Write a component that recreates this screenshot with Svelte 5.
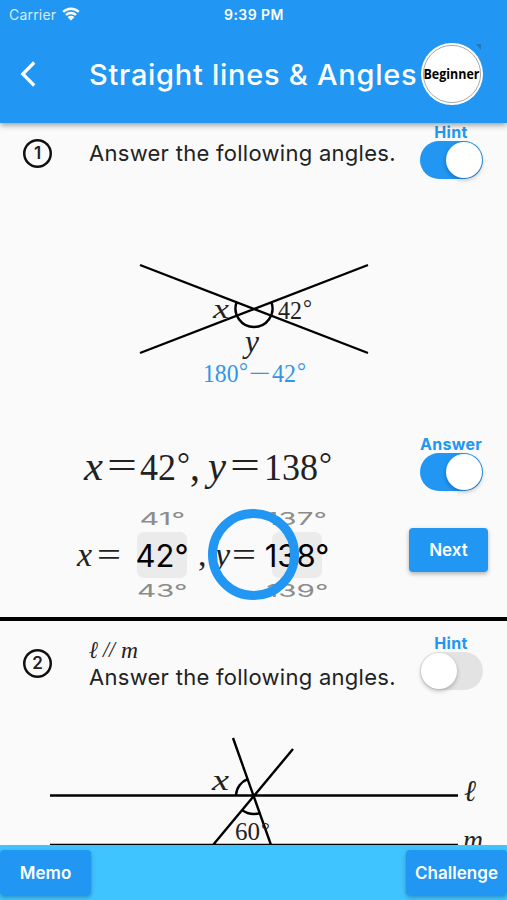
<script>
    let hintOne = $state(true);
    let answerOne = $state(true);
    let hintTwo = $state(false);

    // math labels: t text, x/y baseline start, w drawn width, s font size, i italic
    const figureOne = [
        { t: 'x', x: 213, y: 318, w: 16, s: 28, i: true },
        { t: '42', x: 278, y: 319, w: 24, s: 25 },
        { t: '°', x: 303, y: 316, w: 9, s: 23 },
        { t: 'y', x: 245, y: 352, w: 14, s: 32, i: true }
    ];
    const figureOneHint = [
        { t: '180', x: 203, y: 382, w: 35.5, s: 26 },
        { t: '°', x: 239, y: 379, w: 9, s: 23 },
        { t: '−', x: 249, y: 382, w: 22, s: 26 },
        { t: '42', x: 272, y: 382, w: 24, s: 26 },
        { t: '°', x: 297, y: 379, w: 9, s: 23 }
    ];
    const solution = [
        { t: 'x', x: 84, y: 480, w: 19, s: 41, i: true },
        { t: '=', x: 107, y: 478, w: 30, s: 38 },
        { t: '42', x: 140, y: 480, w: 36, s: 38 },
        { t: '°', x: 177, y: 475, w: 13, s: 34 },
        { t: ',', x: 190, y: 480, w: 10, s: 42 },
        { t: 'y', x: 208, y: 480, w: 18, s: 41, i: true },
        { t: '=', x: 230, y: 478, w: 30, s: 38 },
        { t: '138', x: 264, y: 480, w: 54, s: 38 },
        { t: '°', x: 319, y: 475, w: 13, s: 34 }
    ];
    const figureTwo = [
        { t: 'x', x: 212, y: 790, w: 17, s: 29, i: true },
        { t: '60', x: 235, y: 840, w: 25, s: 26 },
        { t: '°', x: 261, y: 837, w: 9, s: 22 },
        { t: 'ℓ', x: 464, y: 801, w: 12, s: 30, i: true },
        { t: 'm', x: 463, y: 850, w: 20, s: 29, i: true }
    ];
</script>

{#snippet toggle(name, on, flip)}
    <div class="toggle">
        <span class="toggle-name">{name}</span>
        <button class={on ? 'track on' : 'track'} aria-label={name} onclick={flip}>
            <span class="thumb"></span>
        </button>
    </div>
{/snippet}

<div class="screen">
    <header>
        <div class="status">
            <span class="carrier">Carrier</span>
            <svg class="wifi" width="18" height="14" viewBox="0 0 18 14">
                <path d="M1.2 4.9a11.2 11.2 0 0 1 15.6 0M4 8a7.1 7.1 0 0 1 10 0" />
                <path class="dot" d="M9 13.600L5.600 10.200a4.800 4.800 0 0 1 6.800 0z" />
            </svg>
            <span class="time">9:39 PM</span>
        </div>
        <div class="bar">
            <svg class="back" width="18" height="28" viewBox="0 0 18 28">
                <path d="M15.2 2.5L3.8 14l11.4 11.5" />
            </svg>
            <h1>Straight lines &amp; Angles</h1>
            <svg class="level" width="64" height="64" viewBox="0 0 64 64">
                <path class="corner" d="M56 2h5v6z" />
                <circle class="disc" cx="32" cy="32" r="31" />
                <circle class="rim" cx="32" cy="32" r="28.6" />
                <text x="3.5" y="37" textLength="56" lengthAdjust="spacingAndGlyphs">Beginner</text>
            </svg>
        </div>
    </header>

    <main>
        <section class="problem first">
            <div class="head">
                <span class="number">1</span>
                <p>Answer the following angles.</p>
                {@render toggle('Hint', hintOne, () => (hintOne = !hintOne))}
            </div>
            <svg class="figure" width="507" height="245" viewBox="0 190 507 245">
                <path d="M140 265L368 353M140 353L368 265" />
                <path d="M236.5 302.5A18.5 18.5 0 1 0 271.5 302.5" />
                {#each figureOne as g}
                    <text class:italic={g.i} x={g.x} y={g.y} font-size={g.s} textLength={g.w} lengthAdjust="spacingAndGlyphs">{g.t}</text>
                {/each}
                {#if hintOne}
                    {#each figureOneHint as g}
                        <text class="hint" x={g.x} y={g.y} font-size={g.s} textLength={g.w} lengthAdjust="spacingAndGlyphs">{g.t}</text>
                    {/each}
                {/if}
            </svg>
            <div class="row solution">
                <svg width="400" height="65" viewBox="0 435 400 65">
                    {#if answerOne}
                        {#each solution as g}
                            <text class:italic={g.i} x={g.x} y={g.y} font-size={g.s} textLength={g.w} lengthAdjust="spacingAndGlyphs">{g.t}</text>
                        {/each}
                    {/if}
                </svg>
                {@render toggle('Answer', answerOne, () => (answerOne = !answerOne))}
            </div>
            <div class="row picker">
                <span class="var"><i>x</i><b>=</b></span>
                <div class="wheel">
                    <span class="side narrow">41°</span>
                    <span class="picked">42°</span>
                    <span class="side">43°</span>
                </div>
                <span class="var second"><em>,</em><i>y</i><b>=</b></span>
                <div class="wheel">
                    <span class="side">137°</span>
                    <span class="picked">138°</span>
                    <span class="side">139°</span>
                </div>
                <button class="btn next">Next</button>
                <div class="touch"></div>
            </div>
        </section>

        <section class="problem">
            <div class="head two">
                <span class="number">2</span>
                <div class="text">
                    <svg width="60" height="24" viewBox="0 0 60 24">
                        <text class="italic" x="0" y="19" font-size="24" textLength="9" lengthAdjust="spacingAndGlyphs">ℓ</text>
                        <text class="italic" x="14" y="18" font-size="23" textLength="12" lengthAdjust="spacingAndGlyphs">//</text>
                        <text class="italic" x="32" y="19" font-size="23" textLength="17" lengthAdjust="spacingAndGlyphs">m</text>
                    </svg>
                    <p>Answer the following angles.</p>
                </div>
                {@render toggle('Hint', hintTwo, () => (hintTwo = !hintTwo))}
            </div>
            <svg class="figure" width="507" height="150" viewBox="0 710 507 150">
                <path d="M50 795.5H458M50 845H458M233 738L271 845M293 749L213 845" />
                <path d="M236 795A18 18 0 0 1 248 779M242 810Q250 816 260.5 813" />
                {#each figureTwo as g}
                    <text class:italic={g.i} x={g.x} y={g.y} font-size={g.s} textLength={g.w} lengthAdjust="spacingAndGlyphs">{g.t}</text>
                {/each}
            </svg>
        </section>
    </main>

    <footer>
        <button class="btn memo">Memo</button>
        <button class="btn challenge">Challenge</button>
    </footer>
</div>

<style>
    :global(body) {
        margin: 0;
    }

    .screen {
        width: 507px;
        height: 900px;
        display: flex;
        flex-direction: column;
        overflow: hidden;
        background: #fafafa;
        color: #222;
        font-family: Inter, "Liberation Sans", sans-serif;
    }

    svg {
        overflow: visible;
    }

    header {
        height: 123px;
        flex: none;
        background: #2196f3;
        color: #fff;
        box-shadow: 0 2px 6px rgba(0, 0, 0, 0.4);
        z-index: 1;
    }

    .status {
        height: 28px;
        display: grid;
        grid-template-columns: 53px 162px 1fr;
        align-items: center;
        padding-left: 9px;
        font-size: 14px;
    }

    .carrier {
        color: #d9edfd;
        letter-spacing: 0.2px;
    }

    .wifi path {
        fill: none;
        stroke: #fff;
        stroke-width: 2.4;
    }

    .wifi .dot {
        fill: #fff;
        stroke: none;
    }

    .time {
        font-weight: 600;
        letter-spacing: 0.45px;
    }

    .bar {
        height: 92px;
        display: flex;
        align-items: center;
    }

    .back {
        margin-left: 19px;
    }

    .back path {
        fill: none;
        stroke: #fff;
        stroke-width: 3.2;
    }

    h1 {
        width: 331px;
        margin: 1px 0 0 52px;
        font-size: 29px;
        font-weight: 500;
        letter-spacing: 0.73px;
        white-space: nowrap;
    }

    .disc {
        fill: #fff;
    }

    .rim {
        fill: none;
        stroke: #aaa;
        stroke-width: 1;
    }

    .corner {
        fill: #1f78c4;
    }

    .level text {
        font: bold 15px "Open Sans", sans-serif;
        fill: #000;
    }

    main {
        flex: 1;
        min-height: 0;
        overflow: hidden;
    }

    .first {
        height: 494px;
        border-bottom: 4px solid #000;
    }

    .head {
        height: 67px;
        display: flex;
        align-items: flex-start;
        box-sizing: border-box;
        padding-right: 25px;
    }

    .number {
        width: 29px;
        height: 29px;
        margin: 16px 37px 0 23px;
        border-radius: 50%;
        box-shadow: inset 0 0 0 2.5px #111;
        font-size: 17px;
        font-weight: 600;
        line-height: 29px;
        text-align: center;
    }

    p {
        margin: 0;
        font-size: 22px;
        line-height: 28px;
        letter-spacing: 0.28px;
        white-space: nowrap;
    }

    .head > p {
        margin-top: 16px;
    }

    .toggle {
        width: 62px;
        margin-left: auto;
        display: flex;
        flex-direction: column;
        align-items: center;
    }

    .toggle-name {
        height: 18px;
        line-height: 18px;
        color: #2196f3;
        font-size: 16px;
        font-weight: 700;
        letter-spacing: 0.3px;
    }

    .track {
        width: 63px;
        height: 38px;
        padding: 1px;
        display: flex;
        border: 0;
        border-radius: 19px;
        background: #e3e3e4;
    }

    .thumb {
        width: 36px;
        height: 36px;
        border-radius: 50%;
        background: #fff;
        box-shadow: 0 2px 4px rgba(0, 0, 0, 0.25);
    }

    .on {
        justify-content: flex-end;
        background: #2196f3;
    }

    .figure {
        display: block;
    }

    .figure path {
        fill: none;
        stroke: #000;
        stroke-width: 2.4;
    }

    main svg text {
        font-family: "Liberation Serif", "DejaVu Serif", serif;
        fill: #222;
    }

    main svg .italic {
        font-style: italic;
    }

    main svg .hint {
        fill: #3196e8;
    }

    .row {
        display: flex;
        position: relative;
        padding-right: 25px;
    }

    .solution {
        height: 65px;
    }

    .picker {
        height: 110px;
        align-items: center;
        padding-left: 77px;
        padding-right: 19px;
    }

    .var {
        width: 60px;
        height: 44px;
        display: flex;
        align-items: center;
        font-family: "Liberation Serif", serif;
        font-size: 34px;
        flex: none;
    }

    .var b {
        margin-left: 5px;
        font-weight: 400;
        transform: scaleX(1.25);
        transform-origin: left;
    }

    .second {
        width: 85px;
        box-sizing: border-box;
        padding-left: 11px;
    }

    .second em {
        width: 17px;
        font-style: normal;
    }

    .second b {
        margin-left: 2px;
    }

    .wheel {
        width: 50px;
        flex: none;
        display: flex;
        flex-direction: column;
        align-items: center;
    }

    .picked {
        width: 50px;
        height: 46px;
        display: flex;
        align-items: center;
        justify-content: center;
        border-radius: 7px;
        background: #ebebec;
        color: #000;
        font-size: 31px;
    }

    .side {
        height: 26px;
        line-height: 26px;
        color: #8c8c8c;
        font-size: 26px;
        transform: scale(1.14, 0.68);
    }

    .narrow {
        transform: scale(1.18, 0.68);
    }

    .touch {
        position: absolute;
        left: 208px;
        top: 9px;
        width: 91px;
        height: 91px;
        box-sizing: border-box;
        border: 9px solid #2196f3;
        border-radius: 50%;
        pointer-events: none;
    }

    .btn {
        border: 0;
        padding: 0;
        border-radius: 4px;
        background: #2196f3;
        color: #fff;
        font-family: inherit;
        font-size: 17px;
        font-weight: 600;
        letter-spacing: 0.05px;
        box-shadow: 0 2px 4px rgba(0, 0, 0, 0.3);
    }

    .next {
        width: 79px;
        height: 44px;
        margin: 0 0 10px auto;
    }

    .two {
        height: 89px;
        padding-top: 13px;
    }

    .two .number {
        margin-top: 15px;
    }

    .text svg {
        display: block;
        margin-top: 5px;
    }

    footer {
        height: 55px;
        flex: none;
        display: flex;
        align-items: center;
        justify-content: space-between;
        background: #40c4ff;
        z-index: 1;
    }

    .memo {
        width: 91px;
        height: 45px;
    }

    .challenge {
        width: 101px;
        height: 45px;
    }
</style>
